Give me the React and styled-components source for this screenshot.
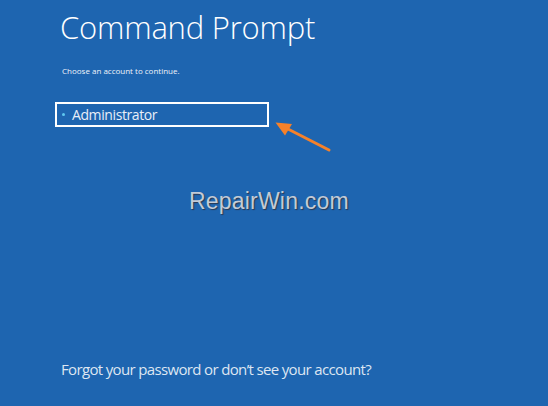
import React from "react";
import styled, { createGlobalStyle } from "styled-components";

const Global = createGlobalStyle`
  html, body { margin: 0; padding: 0; }
  body { background: #1e65b0; }
`;

const Screen = styled.div`
  position: relative;
  width: 548px;
  height: 406px;
  background: #1e65b0;
  color: #ffffff;
  font-family: "Open Sans", "Noto Sans", sans-serif;
  display: flex;
  flex-direction: column;
  align-items: flex-start;
  padding: 7px 0 0 60px;
  box-sizing: border-box;
  overflow: hidden;
`;

const Title = styled.h1`
  margin: 0;
  font-size: 31px;
  font-weight: 300;
  line-height: 40px;
  letter-spacing: -0.2px;
`;

const Subtitle = styled.p`
  margin: 19px 0 0 2px;
  font-size: 8px;
  line-height: 10px;
  color: #eef3fa;
`;

const AccountList = styled.ul`
  list-style: none;
  margin: 26px 0 0 -5px;
  padding: 0;
`;

const AccountItem = styled.li`
  width: 214px;
  height: 25px;
  box-sizing: border-box;
  border: 2px solid #ffffff;
  display: flex;
  align-items: center;
  padding-left: 5px;
  gap: 7px;
  font-size: 14px;
  font-weight: 400;
  letter-spacing: -0.4px;
  color: #e8eef8;
`;

const Bullet = styled.span`
  flex: none;
  width: 3px;
  height: 3px;
  border-radius: 50%;
  background: #5fc8f0;
`;

const Spacer = styled.div`
  flex: 1;
`;

const Forgot = styled.a`
  margin: 0 0 26px 1px;
  font-size: 15px;
  line-height: 22px;
  letter-spacing: -0.65px;
  color: #dde6f2;
  text-decoration: none;
`;

const Watermark = styled.div`
  position: absolute;
  left: 189px;
  top: 188px;
  font-family: "Liberation Sans", Arial, sans-serif;
  font-size: 23px;
  line-height: normal;
  color: #c3cbd6;
  text-shadow: 1px 1px 1px #2a3850;
  letter-spacing: 0.2px;
`;

const ArrowSvg = styled.svg`
  position: absolute;
  left: 270px;
  top: 118px;
`;

function Arrow() {
  return (
    <ArrowSvg width="66" height="38" viewBox="0 0 66 38">
      <line x1="16" y1="10" x2="59" y2="32" stroke="#f5812a" strokeWidth="3" strokeLinecap="round" />
      <polygon points="5.5,4.5 22,6 15,17.5" fill="#f5812a" />
    </ArrowSvg>
  );
}

export default function App() {
  return (
    <>
      <Global />
      <Screen>
        <Title>Command Prompt</Title>
        <Subtitle>Choose an account to continue.</Subtitle>
        <AccountList>
          <AccountItem>
            <Bullet />
            Administrator
          </AccountItem>
        </AccountList>
        <Spacer />
        <Forgot href="#">Forgot your password or don’t see your account?</Forgot>
        <Watermark>RepairWin.com</Watermark>
        <Arrow />
      </Screen>
    </>
  );
}
